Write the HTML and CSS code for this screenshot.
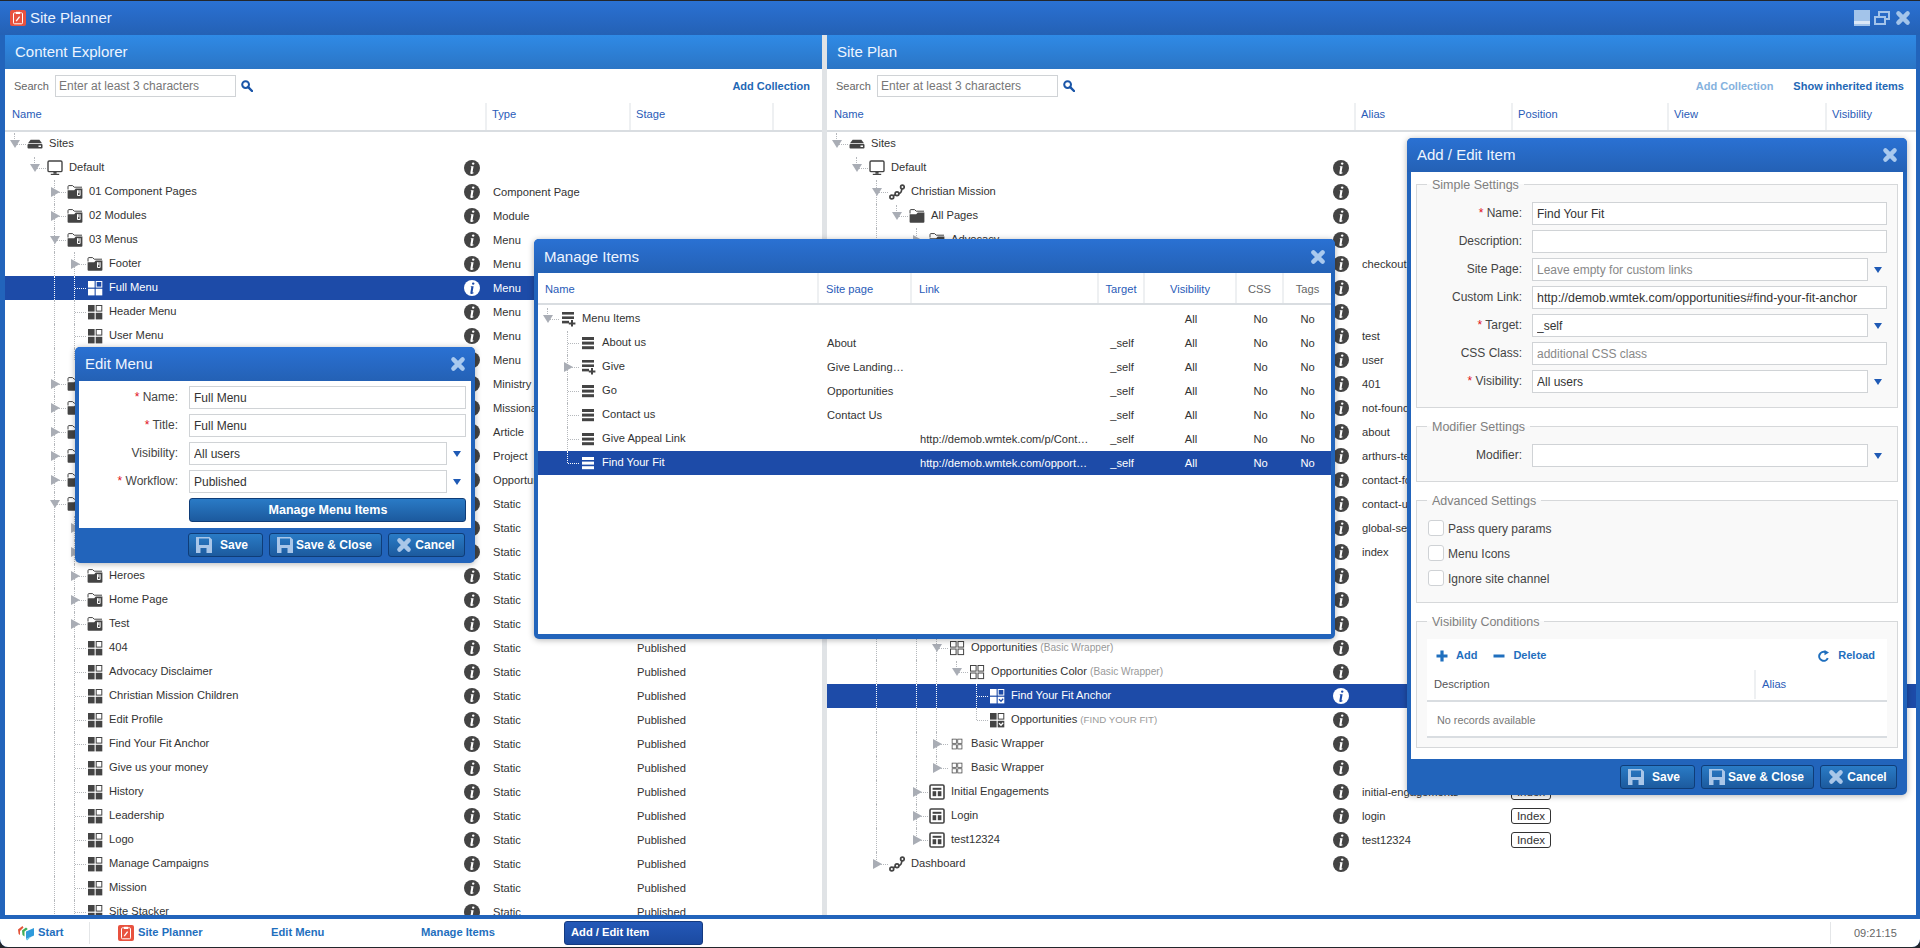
FILE: index.html
```html
<!DOCTYPE html>
<html lang="en">
<head>
<meta charset="utf-8">
<title>Site Planner</title>
<link rel="stylesheet" href="styles.css">
</head>
<body>
<svg class="defs" aria-hidden="true">
  <symbol id="sites" viewBox="0 0 16 16"><path fill="currentColor" d="M3.6 3.8h8.8L15 7.2H1z"/><path fill="currentColor" fill-rule="evenodd" d="M1.5 8h13a1 1 0 0 1 1 1v2.6a1 1 0 0 1-1 1h-13a1 1 0 0 1-1-1V9a1 1 0 0 1 1-1zM11.5 9.6v1.4h2.5V9.6z"/></symbol>
  <symbol id="monitor" viewBox="0 0 16 16"><rect x="1" y="1" width="14" height="10.6" rx="1.2" fill="none" stroke="currentColor" stroke-width="1.4"/><rect x="6.4" y="12" width="3.2" height="1.8" fill="currentColor"/><rect x="3.8" y="13.8" width="8.4" height="1.2" fill="currentColor"/></symbol>
  <symbol id="folder" viewBox="0 0 16 16"><path fill="none" stroke="currentColor" stroke-width="1" d="M1 5.5V2.600a1 1 0 0 1 1-1h3.600l1.600 1.600H15"/><path fill="currentColor" d="M.6 6.200h6.600l1.600-1.700h6.600v9.200a1 1 0 0 1-1 1H1.600a1 1 0 0 1-1-1z"/></symbol>
  <symbol id="folderm" viewBox="0 0 16 16"><path fill="none" stroke="currentColor" stroke-width="1" d="M1 5.500V2.600a1 1 0 0 1 1-1h3.600l1.600 1.600H15"/><path fill="currentColor" d="M.6 6.200h6.600l1.600-1.700h6.600v9.200a1 1 0 0 1-1 1H1.600a1 1 0 0 1-1-1z"/><path fill="none" stroke="#fff" stroke-width="1" d="M10.500 6.200v5.300h2.600V6.200M11.800 6.200v3"/></symbol>
  <symbol id="tiles" viewBox="0 0 16 16"><rect x="1" y="1" width="6.600" height="6.600" fill="currentColor"/><rect x="9.200" y="1.500" width="5.600" height="5.600" fill="none" stroke="currentColor"/><rect x="1" y="8.800" width="6.600" height="6.600" fill="currentColor"/><rect x="8.700" y="8.800" width="6.600" height="6.600" fill="currentColor"/></symbol>
  <symbol id="tcheck" viewBox="0 0 16 16"><rect x="1" y="1" width="6.600" height="6.600" fill="currentColor"/><rect x="9.200" y="1.500" width="5.600" height="5.600" fill="none" stroke="currentColor"/><rect x="1" y="8.800" width="6.600" height="6.600" fill="currentColor"/><rect x="8.700" y="8.800" width="6.600" height="6.600" fill="currentColor"/><path d="M10 11.200l2 2 2.200-2.400" fill="none" stroke="var(--ck,#fff)" stroke-width="1.300"/></symbol>
  <symbol id="wrap" viewBox="0 0 16 16"><rect x="1.500" y="1.500" width="5.600" height="5.600" fill="none" stroke="currentColor"/><rect x="9" y="1.500" width="5.600" height="5.600" fill="none" stroke="currentColor"/><rect x="1.500" y="9" width="5.600" height="5.600" fill="none" stroke="currentColor"/><rect x="9" y="9" width="5.600" height="5.600" fill="none" stroke="currentColor"/></symbol>
  <symbol id="layout" viewBox="0 0 16 16"><rect x="1" y="1" width="14" height="14" rx="1.200" fill="none" stroke="currentColor" stroke-width="1.600"/><rect x="3.600" y="3.800" width="8.800" height="2" fill="currentColor"/><rect x="3.600" y="7.200" width="3.600" height="5" fill="currentColor"/><rect x="8.800" y="7.200" width="3.600" height="5" fill="currentColor"/></symbol>
  <symbol id="net" viewBox="0 0 16 16"><g fill="none" stroke="currentColor" stroke-width="1.700"><circle cx="2.800" cy="13" r="1.900"/><circle cx="8" cy="9.800" r="1.900"/><circle cx="13.400" cy="3" r="1.800"/><path d="M4.400 11.800l1.800-1.200M9.800 9.600c1.800-.4 2.800-1.800 3-4.600"/></g></symbol>
  <symbol id="list" viewBox="0 0 16 16"><rect x="2" y="2" width="12" height="3" fill="currentColor"/><rect x="2" y="6.600" width="12" height="3" fill="currentColor"/><rect x="2" y="11.200" width="12" height="3" fill="currentColor"/></symbol>
  <symbol id="listp" viewBox="0 0 16 16"><rect x="2" y="1" width="12" height="2.600" fill="currentColor"/><rect x="2" y="5.400" width="12" height="2.600" fill="currentColor"/><rect x="2" y="9.800" width="7" height="2.600" fill="currentColor"/><path d="M12 9v6.600M8.800 12.400h6.600" stroke="currentColor" stroke-width="2"/></symbol>
  <symbol id="info" viewBox="0 0 16 16"><circle cx="8" cy="8" r="8" fill="currentColor"/><circle cx="9.200" cy="3.600" r="1.200" fill="var(--ck,#fff)"/><path fill="var(--ck,#fff)" d="M6.900 6.200h2.700L8.600 12c-.1.600.2.600.9.2v1c-1.600 1-3.400 1.100-3.100-.8l.9-5.200-.6-.2z"/></symbol>
  <symbol id="cross" viewBox="0 0 16 16"><path d="M3.400 3.400l9.200 9.200M12.600 3.400l-9.200 9.200" stroke="currentColor" stroke-width="4.400" stroke-linecap="round"/></symbol>
  <symbol id="restore" viewBox="0 0 16 14"><path d="M1 6h10v7H1zM5 5V1h10v7h-3.500" fill="none" stroke="currentColor" stroke-width="2"/></symbol>
  <symbol id="floppy" viewBox="0 0 16 16"><path fill="currentColor" fill-rule="evenodd" d="M0 0h13.500L16 2.500V16H0zM3 1.500V8h10V1.500zM4.500 11v5h6v-5z"/></symbol>
  <symbol id="search" viewBox="0 0 12 12"><circle cx="4.600" cy="4.600" r="3.400" fill="none" stroke="currentColor" stroke-width="2"/><path d="M7.200 7.200l3.800 3.800" stroke="currentColor" stroke-width="2.400" stroke-linecap="round"/></symbol>
  <symbol id="plan" viewBox="0 0 16 16"><rect width="16" height="16" rx="2" fill="#e8523f"/><rect x="3.500" y="2.800" width="9" height="11" rx="1" fill="none" stroke="#fff"/><rect x="6" y="1.800" width="4" height="2.200" fill="#fff"/><path d="M6.200 11.200l3.400-4.600" stroke="#fff" stroke-width="1.300"/></symbol>
  <symbol id="start" viewBox="0 0 16 16"><path fill="#e4553a" d="M0 4.500L4.500 1l1 1.500L2 6v4L.6 9z"/><path fill="#3fae5a" d="M4 5.500L8 2.500l1.800 1.400L6.500 6.500v5L4.500 10z"/><path fill="#2f9bdc" d="M8 6.500L16 3v7.500L8 14z"/><path fill="#5cc3e6" d="M8 14l5-2.200-4 3.700z"/></symbol>
  <symbol id="plus" viewBox="0 0 12 12"><path d="M6 .5v11M.5 6h11" stroke="currentColor" stroke-width="3.200"/></symbol>
  <symbol id="minus" viewBox="0 0 12 12"><path d="M.5 6h11" stroke="currentColor" stroke-width="3"/></symbol>
  <symbol id="reload" viewBox="0 0 12 12"><path d="M9.800 8.200A4.500 4.500 0 1 1 7.500 2.200" fill="none" stroke="currentColor" stroke-width="2"/><path fill="currentColor" d="M6.500 0l4.500 2.600-4.500 2.600z"/></symbol>
</svg>

<div class="window">
  <header class="titlebar">
    <svg class="tb-logo"><use href="#plan"/></svg>
    <span class="tb-title">Site Planner</span>
    <span class="tb-btns">
      <span class="wb-min"></span>
      <svg class="wb-rest"><use href="#restore"/></svg>
      <svg class="wb-close"><use href="#cross"/></svg>
    </span>
  </header>

  <main class="panels">
    <section class="panel panel-l">
      <h2 class="p-head">Content Explorer</h2>
      <div class="p-search">
        <label class="s-label">Search</label>
        <input class="s-input" placeholder="Enter at least 3 characters">
        <svg class="s-icon"><use href="#search"/></svg>
        <a class="p-link p-link-end">Add Collection</a>
      </div>
      <div class="cols cols-l">
        <span class="col col-sep">Name</span><span class="col col-sep">Type</span><span class="col col-sep">Stage</span><span class="col"></span>
      </div>
      <div class="tree tree-l">
        <div class="row"><div class="name"><i class="s u h"><b class="td"></b></i><svg class="ic"><use href="#sites"/></svg><span class="lb">Sites</span></div></div>
        <div class="row"><div class="name"><i class="s"></i><i class="s u h"><b class="td"></b></i><svg class="ic"><use href="#monitor"/></svg><span class="lb">Default</span><svg class="inf"><use href="#info"/></svg></div></div>
        <div class="row"><div class="name"><i class="s"></i><i class="s"></i><i class="s v h"><b class="tr"></b></i><svg class="ic"><use href="#folderm"/></svg><span class="lb">01 Component Pages</span><svg class="inf"><use href="#info"/></svg></div><div class="c1">Component Page</div></div>
        <div class="row"><div class="name"><i class="s"></i><i class="s"></i><i class="s v h"><b class="tr"></b></i><svg class="ic"><use href="#folderm"/></svg><span class="lb">02 Modules</span><svg class="inf"><use href="#info"/></svg></div><div class="c1">Module</div></div>
        <div class="row"><div class="name"><i class="s"></i><i class="s"></i><i class="s v h"><b class="td"></b></i><svg class="ic"><use href="#folderm"/></svg><span class="lb">03 Menus</span><svg class="inf"><use href="#info"/></svg></div><div class="c1">Menu</div></div>
        <div class="row"><div class="name"><i class="s"></i><i class="s"></i><i class="s v"></i><i class="s v h"><b class="tr"></b></i><svg class="ic"><use href="#folderm"/></svg><span class="lb">Footer</span><svg class="inf"><use href="#info"/></svg></div><div class="c1">Menu</div></div>
        <div class="row sel"><div class="name"><i class="s"></i><i class="s"></i><i class="s v"></i><i class="s v h"></i><svg class="ic"><use href="#tiles"/></svg><span class="lb">Full Menu</span><svg class="inf"><use href="#info"/></svg></div><div class="c1">Menu</div></div>
        <div class="row"><div class="name"><i class="s"></i><i class="s"></i><i class="s v"></i><i class="s v h"></i><svg class="ic"><use href="#tiles"/></svg><span class="lb">Header Menu</span><svg class="inf"><use href="#info"/></svg></div><div class="c1">Menu</div></div>
        <div class="row"><div class="name"><i class="s"></i><i class="s"></i><i class="s v"></i><i class="s v h"></i><svg class="ic"><use href="#tiles"/></svg><span class="lb">User Menu</span><svg class="inf"><use href="#info"/></svg></div><div class="c1">Menu</div></div>
        <div class="row"><div class="name"><i class="s"></i><i class="s"></i><i class="s v"></i><i class="s e h"></i><svg class="ic"><use href="#tiles"/></svg><span class="lb">Mobile Menu</span><svg class="inf"><use href="#info"/></svg></div><div class="c1">Menu</div></div>
        <div class="row"><div class="name"><i class="s"></i><i class="s"></i><i class="s v h"><b class="tr"></b></i><svg class="ic"><use href="#folderm"/></svg><span class="lb">Ministries</span><svg class="inf"><use href="#info"/></svg></div><div class="c1">Ministry</div></div>
        <div class="row"><div class="name"><i class="s"></i><i class="s"></i><i class="s v h"><b class="tr"></b></i><svg class="ic"><use href="#folderm"/></svg><span class="lb">Missionals</span><svg class="inf"><use href="#info"/></svg></div><div class="c1">Missional</div></div>
        <div class="row"><div class="name"><i class="s"></i><i class="s"></i><i class="s v h"><b class="tr"></b></i><svg class="ic"><use href="#folderm"/></svg><span class="lb">Articles</span><svg class="inf"><use href="#info"/></svg></div><div class="c1">Article</div></div>
        <div class="row"><div class="name"><i class="s"></i><i class="s"></i><i class="s v h"><b class="tr"></b></i><svg class="ic"><use href="#folderm"/></svg><span class="lb">Projects</span><svg class="inf"><use href="#info"/></svg></div><div class="c1">Project</div></div>
        <div class="row"><div class="name"><i class="s"></i><i class="s"></i><i class="s v h"><b class="tr"></b></i><svg class="ic"><use href="#folderm"/></svg><span class="lb">Opportunities</span><svg class="inf"><use href="#info"/></svg></div><div class="c1">Opportunity</div></div>
        <div class="row"><div class="name"><i class="s"></i><i class="s"></i><i class="s v h"><b class="td"></b></i><svg class="ic"><use href="#folderm"/></svg><span class="lb">Static</span><svg class="inf"><use href="#info"/></svg></div><div class="c1">Static</div><div class="c2">Published</div></div>
        <div class="row"><div class="name"><i class="s"></i><i class="s"></i><i class="s v"></i><i class="s v h"><b class="tr"></b></i><svg class="ic"><use href="#folderm"/></svg><span class="lb">Banners</span><svg class="inf"><use href="#info"/></svg></div><div class="c1">Static</div><div class="c2">Published</div></div>
        <div class="row"><div class="name"><i class="s"></i><i class="s"></i><i class="s v"></i><i class="s v h"><b class="tr"></b></i><svg class="ic"><use href="#folderm"/></svg><span class="lb">Footers</span><svg class="inf"><use href="#info"/></svg></div><div class="c1">Static</div><div class="c2">Published</div></div>
        <div class="row"><div class="name"><i class="s"></i><i class="s"></i><i class="s v"></i><i class="s v h"><b class="tr"></b></i><svg class="ic"><use href="#folderm"/></svg><span class="lb">Heroes</span><svg class="inf"><use href="#info"/></svg></div><div class="c1">Static</div><div class="c2">Published</div></div>
        <div class="row"><div class="name"><i class="s"></i><i class="s"></i><i class="s v"></i><i class="s v h"><b class="tr"></b></i><svg class="ic"><use href="#folderm"/></svg><span class="lb">Home Page</span><svg class="inf"><use href="#info"/></svg></div><div class="c1">Static</div><div class="c2">Published</div></div>
        <div class="row"><div class="name"><i class="s"></i><i class="s"></i><i class="s v"></i><i class="s v h"><b class="tr"></b></i><svg class="ic"><use href="#folderm"/></svg><span class="lb">Test</span><svg class="inf"><use href="#info"/></svg></div><div class="c1">Static</div><div class="c2">Published</div></div>
        <div class="row"><div class="name"><i class="s"></i><i class="s"></i><i class="s v"></i><i class="s v h"></i><svg class="ic"><use href="#tiles"/></svg><span class="lb">404</span><svg class="inf"><use href="#info"/></svg></div><div class="c1">Static</div><div class="c2">Published</div></div>
        <div class="row"><div class="name"><i class="s"></i><i class="s"></i><i class="s v"></i><i class="s v h"></i><svg class="ic"><use href="#tiles"/></svg><span class="lb">Advocacy Disclaimer</span><svg class="inf"><use href="#info"/></svg></div><div class="c1">Static</div><div class="c2">Published</div></div>
        <div class="row"><div class="name"><i class="s"></i><i class="s"></i><i class="s v"></i><i class="s v h"></i><svg class="ic"><use href="#tiles"/></svg><span class="lb">Christian Mission Children</span><svg class="inf"><use href="#info"/></svg></div><div class="c1">Static</div><div class="c2">Published</div></div>
        <div class="row"><div class="name"><i class="s"></i><i class="s"></i><i class="s v"></i><i class="s v h"></i><svg class="ic"><use href="#tiles"/></svg><span class="lb">Edit Profile</span><svg class="inf"><use href="#info"/></svg></div><div class="c1">Static</div><div class="c2">Published</div></div>
        <div class="row"><div class="name"><i class="s"></i><i class="s"></i><i class="s v"></i><i class="s v h"></i><svg class="ic"><use href="#tiles"/></svg><span class="lb">Find Your Fit Anchor</span><svg class="inf"><use href="#info"/></svg></div><div class="c1">Static</div><div class="c2">Published</div></div>
        <div class="row"><div class="name"><i class="s"></i><i class="s"></i><i class="s v"></i><i class="s v h"></i><svg class="ic"><use href="#tiles"/></svg><span class="lb">Give us your money</span><svg class="inf"><use href="#info"/></svg></div><div class="c1">Static</div><div class="c2">Published</div></div>
        <div class="row"><div class="name"><i class="s"></i><i class="s"></i><i class="s v"></i><i class="s v h"></i><svg class="ic"><use href="#tiles"/></svg><span class="lb">History</span><svg class="inf"><use href="#info"/></svg></div><div class="c1">Static</div><div class="c2">Published</div></div>
        <div class="row"><div class="name"><i class="s"></i><i class="s"></i><i class="s v"></i><i class="s v h"></i><svg class="ic"><use href="#tiles"/></svg><span class="lb">Leadership</span><svg class="inf"><use href="#info"/></svg></div><div class="c1">Static</div><div class="c2">Published</div></div>
        <div class="row"><div class="name"><i class="s"></i><i class="s"></i><i class="s v"></i><i class="s v h"></i><svg class="ic"><use href="#tiles"/></svg><span class="lb">Logo</span><svg class="inf"><use href="#info"/></svg></div><div class="c1">Static</div><div class="c2">Published</div></div>
        <div class="row"><div class="name"><i class="s"></i><i class="s"></i><i class="s v"></i><i class="s v h"></i><svg class="ic"><use href="#tiles"/></svg><span class="lb">Manage Campaigns</span><svg class="inf"><use href="#info"/></svg></div><div class="c1">Static</div><div class="c2">Published</div></div>
        <div class="row"><div class="name"><i class="s"></i><i class="s"></i><i class="s v"></i><i class="s v h"></i><svg class="ic"><use href="#tiles"/></svg><span class="lb">Mission</span><svg class="inf"><use href="#info"/></svg></div><div class="c1">Static</div><div class="c2">Published</div></div>
        <div class="row"><div class="name"><i class="s"></i><i class="s"></i><i class="s v"></i><i class="s v h"></i><svg class="ic"><use href="#tiles"/></svg><span class="lb">Site Stacker</span><svg class="inf"><use href="#info"/></svg></div><div class="c1">Static</div><div class="c2">Published</div></div>
      </div>
    </section>

    <div class="splitter"></div>

    <section class="panel panel-r">
      <h2 class="p-head">Site Plan</h2>
      <div class="p-search">
        <label class="s-label">Search</label>
        <input class="s-input" placeholder="Enter at least 3 characters">
        <svg class="s-icon"><use href="#search"/></svg>
        <a class="p-link p-link-end p-link-off">Add Collection</a>
        <a class="p-link">Show inherited items</a>
      </div>
      <div class="cols cols-r">
        <span class="col col-sep">Name</span><span class="col col-sep">Alias</span><span class="col col-sep">Position</span><span class="col col-sep">View</span><span class="col">Visibility</span>
      </div>
      <div class="tree tree-r">
        <div class="row"><div class="name"><i class="s u h"><b class="td"></b></i><svg class="ic"><use href="#sites"/></svg><span class="lb">Sites</span></div></div>
        <div class="row"><div class="name"><i class="s"></i><i class="s u h"><b class="td"></b></i><svg class="ic"><use href="#monitor"/></svg><span class="lb">Default</span><svg class="inf"><use href="#info"/></svg></div></div>
        <div class="row"><div class="name"><i class="s"></i><i class="s"></i><i class="s v h"><b class="td"></b></i><svg class="ic"><use href="#net"/></svg><span class="lb">Christian Mission</span><svg class="inf"><use href="#info"/></svg></div></div>
        <div class="row"><div class="name"><i class="s"></i><i class="s"></i><i class="s v"></i><i class="s u h"><b class="td"></b></i><svg class="ic"><use href="#folder"/></svg><span class="lb">All Pages</span><svg class="inf"><use href="#info"/></svg></div></div>
        <div class="row"><div class="name"><i class="s"></i><i class="s"></i><i class="s v"></i><i class="s"></i><i class="s v h"><b class="tr"></b></i><svg class="ic"><use href="#folder"/></svg><span class="lb">Advocacy</span><svg class="inf"><use href="#info"/></svg></div></div>
        <div class="row"><div class="name"><i class="s"></i><i class="s"></i><i class="s v"></i><i class="s"></i><i class="s v h"><b class="tr"></b></i><svg class="ic"><use href="#layout"/></svg><span class="lb">Checkout</span><svg class="inf"><use href="#info"/></svg></div><div class="c1">checkout</div></div>
        <div class="row"><div class="name"><i class="s"></i><i class="s"></i><i class="s v"></i><i class="s"></i><i class="s v h"><b class="tr"></b></i><svg class="ic"><use href="#folder"/></svg><span class="lb">Errors</span><svg class="inf"><use href="#info"/></svg></div></div>
        <div class="row"><div class="name"><i class="s"></i><i class="s"></i><i class="s v"></i><i class="s"></i><i class="s v h"><b class="tr"></b></i><svg class="ic"><use href="#folder"/></svg><span class="lb">Projects</span><svg class="inf"><use href="#info"/></svg></div></div>
        <div class="row"><div class="name"><i class="s"></i><i class="s"></i><i class="s v"></i><i class="s"></i><i class="s v h"><b class="tr"></b></i><svg class="ic"><use href="#layout"/></svg><span class="lb">Test</span><svg class="inf"><use href="#info"/></svg></div><div class="c1">test</div></div>
        <div class="row"><div class="name"><i class="s"></i><i class="s"></i><i class="s v"></i><i class="s"></i><i class="s v h"><b class="tr"></b></i><svg class="ic"><use href="#layout"/></svg><span class="lb">User</span><svg class="inf"><use href="#info"/></svg></div><div class="c1">user</div></div>
        <div class="row"><div class="name"><i class="s"></i><i class="s"></i><i class="s v"></i><i class="s"></i><i class="s v h"><b class="tr"></b></i><svg class="ic"><use href="#layout"/></svg><span class="lb">401</span><svg class="inf"><use href="#info"/></svg></div><div class="c1">401</div></div>
        <div class="row"><div class="name"><i class="s"></i><i class="s"></i><i class="s v"></i><i class="s"></i><i class="s v h"><b class="tr"></b></i><svg class="ic"><use href="#layout"/></svg><span class="lb">404</span><svg class="inf"><use href="#info"/></svg></div><div class="c1">not-found</div></div>
        <div class="row"><div class="name"><i class="s"></i><i class="s"></i><i class="s v"></i><i class="s"></i><i class="s v h"><b class="tr"></b></i><svg class="ic"><use href="#layout"/></svg><span class="lb">About</span><svg class="inf"><use href="#info"/></svg></div><div class="c1">about</div></div>
        <div class="row"><div class="name"><i class="s"></i><i class="s"></i><i class="s v"></i><i class="s"></i><i class="s v h"><b class="tr"></b></i><svg class="ic"><use href="#layout"/></svg><span class="lb">Arthurs Test</span><svg class="inf"><use href="#info"/></svg></div><div class="c1">arthurs-test</div></div>
        <div class="row"><div class="name"><i class="s"></i><i class="s"></i><i class="s v"></i><i class="s"></i><i class="s v h"><b class="tr"></b></i><svg class="ic"><use href="#layout"/></svg><span class="lb">Contact Form</span><svg class="inf"><use href="#info"/></svg></div><div class="c1">contact-form</div></div>
        <div class="row"><div class="name"><i class="s"></i><i class="s"></i><i class="s v"></i><i class="s"></i><i class="s v h"><b class="tr"></b></i><svg class="ic"><use href="#layout"/></svg><span class="lb">Contact Us</span><svg class="inf"><use href="#info"/></svg></div><div class="c1">contact-us</div></div>
        <div class="row"><div class="name"><i class="s"></i><i class="s"></i><i class="s v"></i><i class="s"></i><i class="s v h"><b class="tr"></b></i><svg class="ic"><use href="#layout"/></svg><span class="lb">Global Settings</span><svg class="inf"><use href="#info"/></svg></div><div class="c1">global-settings</div></div>
        <div class="row"><div class="name"><i class="s"></i><i class="s"></i><i class="s v"></i><i class="s"></i><i class="s v h"><b class="td"></b></i><svg class="ic"><use href="#layout"/></svg><span class="lb">Home</span><svg class="inf"><use href="#info"/></svg></div><div class="c1">index</div></div>
        <div class="row"><div class="name"><i class="s"></i><i class="s"></i><i class="s v"></i><i class="s"></i><i class="s v"></i><i class="s v h"><b class="tr"></b></i><svg class="ic"><use href="#wrap"/></svg><span class="lb">Hero</span><svg class="inf"><use href="#info"/></svg></div></div>
        <div class="row"><div class="name"><i class="s"></i><i class="s"></i><i class="s v"></i><i class="s"></i><i class="s v"></i><i class="s v h"><b class="tr"></b></i><svg class="ic"><use href="#wrap"/></svg><span class="lb">Mission</span><svg class="inf"><use href="#info"/></svg></div></div>
        <div class="row"><div class="name"><i class="s"></i><i class="s"></i><i class="s v"></i><i class="s"></i><i class="s v"></i><i class="s v h"><b class="tr"></b></i><svg class="ic"><use href="#wrap"/></svg><span class="lb">Give</span><svg class="inf"><use href="#info"/></svg></div></div>
        <div class="row"><div class="name"><i class="s"></i><i class="s"></i><i class="s v"></i><i class="s"></i><i class="s v"></i><i class="s v h"><b class="td"></b></i><svg class="ic"><use href="#wrap"/></svg><span class="lb">Opportunities <small class="mut">(Basic Wrapper)</small></span><svg class="inf"><use href="#info"/></svg></div></div>
        <div class="row"><div class="name"><i class="s"></i><i class="s"></i><i class="s v"></i><i class="s"></i><i class="s v"></i><i class="s v"></i><i class="s u h"><b class="td"></b></i><svg class="ic"><use href="#wrap"/></svg><span class="lb">Opportunities Color <small class="mut">(Basic Wrapper)</small></span><svg class="inf"><use href="#info"/></svg></div></div>
        <div class="row sel"><div class="name"><i class="s"></i><i class="s"></i><i class="s v"></i><i class="s"></i><i class="s v"></i><i class="s v"></i><i class="s"></i><i class="s v h"></i><svg class="ic"><use href="#tcheck"/></svg><span class="lb">Find Your Fit Anchor</span><svg class="inf"><use href="#info"/></svg></div></div>
        <div class="row"><div class="name"><i class="s"></i><i class="s"></i><i class="s v"></i><i class="s"></i><i class="s v"></i><i class="s v"></i><i class="s"></i><i class="s e h"></i><svg class="ic"><use href="#tcheck"/></svg><span class="lb">Opportunities <small class="mut mut-up">(FIND YOUR FIT)</small></span><svg class="inf"><use href="#info"/></svg></div></div>
        <div class="row"><div class="name"><i class="s"></i><i class="s"></i><i class="s v"></i><i class="s"></i><i class="s v"></i><i class="s v h"><b class="tr"></b></i><svg class="ic ic-sm"><use href="#wrap"/></svg><span class="lb">Basic Wrapper</span><svg class="inf"><use href="#info"/></svg></div></div>
        <div class="row"><div class="name"><i class="s"></i><i class="s"></i><i class="s v"></i><i class="s"></i><i class="s v"></i><i class="s e h"><b class="tr"></b></i><svg class="ic ic-sm"><use href="#wrap"/></svg><span class="lb">Basic Wrapper</span><svg class="inf"><use href="#info"/></svg></div></div>
        <div class="row"><div class="name"><i class="s"></i><i class="s"></i><i class="s v"></i><i class="s"></i><i class="s v h"><b class="tr"></b></i><svg class="ic"><use href="#layout"/></svg><span class="lb">Initial Engagements</span><svg class="inf"><use href="#info"/></svg></div><div class="c1">initial-engagements</div><div class="c2"><span class="pill">Index</span></div></div>
        <div class="row"><div class="name"><i class="s"></i><i class="s"></i><i class="s v"></i><i class="s"></i><i class="s v h"><b class="tr"></b></i><svg class="ic"><use href="#layout"/></svg><span class="lb">Login</span><svg class="inf"><use href="#info"/></svg></div><div class="c1">login</div><div class="c2"><span class="pill">Index</span></div></div>
        <div class="row"><div class="name"><i class="s"></i><i class="s"></i><i class="s v"></i><i class="s"></i><i class="s e h"><b class="tr"></b></i><svg class="ic"><use href="#layout"/></svg><span class="lb">test12324</span><svg class="inf"><use href="#info"/></svg></div><div class="c1">test12324</div><div class="c2"><span class="pill">Index</span></div></div>
        <div class="row"><div class="name"><i class="s"></i><i class="s"></i><i class="s e h"><b class="tr"></b></i><svg class="ic"><use href="#net"/></svg><span class="lb">Dashboard</span><svg class="inf"><use href="#info"/></svg></div></div>
      </div>
    </section>
  </main>

  <footer class="taskbar">
    <div class="tk-start"><svg class="tk-ic"><use href="#start"/></svg><span>Start</span></div>
    <div class="tk-tabs">
      <a class="tk-tab tk-tab-first"><svg class="tk-ic"><use href="#plan"/></svg>Site Planner</a>
      <a class="tk-tab">Edit Menu</a>
      <a class="tk-tab">Manage Items</a>
      <a class="tk-tab tk-active">Add / Edit Item</a>
    </div>
    <div class="tk-clock">09:21:15</div>
  </footer>
</div>

<section class="modal m-edit">
  <header class="m-title"><span>Edit Menu</span><svg class="m-x"><use href="#cross"/></svg></header>
  <div class="m-body form-edit">
    <div class="f-row"><label class="f-label"><em>*</em> Name:</label><input class="f-in" value="Full Menu"></div>
    <div class="f-row"><label class="f-label"><em>*</em> Title:</label><input class="f-in" value="Full Menu"></div>
    <div class="f-row"><label class="f-label">Visibility:</label><input class="f-in f-combo" value="All users"><span class="f-arrow"></span></div>
    <div class="f-row"><label class="f-label"><em>*</em> Workflow:</label><input class="f-in f-combo" value="Published"><span class="f-arrow"></span></div>
    <div class="f-row"><span class="f-label"></span><button class="btn btn-wide">Manage Menu Items</button></div>
  </div>
  <footer class="m-foot">
    <button class="btn b-save"><svg class="b-ic"><use href="#floppy"/></svg><span>Save</span></button>
    <button class="btn b-close"><svg class="b-ic"><use href="#floppy"/></svg><span>Save &amp; Close</span></button>
    <button class="btn b-cancel"><svg class="b-ic"><use href="#cross"/></svg><span>Cancel</span></button>
  </footer>
</section>

<section class="modal m-manage">
  <header class="m-title"><span>Manage Items</span><svg class="m-x"><use href="#cross"/></svg></header>
  <div class="m-body mg">
    <div class="mg-row mg-head">
      <span class="col-sep mg-left">Name</span><span class="col-sep mg-left">Site page</span><span class="col-sep mg-left">Link</span><span class="col-sep mg-c">Target</span><span class="col-sep mg-c">Visibility</span><span class="col-sep mg-c mg-gr">CSS</span><span class="mg-c mg-gr">Tags</span>
    </div>
    <div class="mg-row"><div class="mg-name"><i class="s u h"><b class="td"></b></i><svg class="ic"><use href="#listp"/></svg><span class="lb">Menu Items</span></div><span class="mg-t"></span><span class="mg-t"></span><span class="mg-c"></span><span class="mg-c">All</span><span class="mg-c">No</span><span class="mg-c">No</span></div>
    <div class="mg-row"><div class="mg-name"><i class="s"></i><i class="s v h"></i><svg class="ic"><use href="#list"/></svg><span class="lb">About us</span></div><span class="mg-t">About</span><span class="mg-t"></span><span class="mg-c">_self</span><span class="mg-c">All</span><span class="mg-c">No</span><span class="mg-c">No</span></div>
    <div class="mg-row"><div class="mg-name"><i class="s"></i><i class="s v h"><b class="tr"></b></i><svg class="ic"><use href="#listp"/></svg><span class="lb">Give</span></div><span class="mg-t">Give Landing Page</span><span class="mg-t"></span><span class="mg-c">_self</span><span class="mg-c">All</span><span class="mg-c">No</span><span class="mg-c">No</span></div>
    <div class="mg-row"><div class="mg-name"><i class="s"></i><i class="s v h"></i><svg class="ic"><use href="#list"/></svg><span class="lb">Go</span></div><span class="mg-t">Opportunities</span><span class="mg-t"></span><span class="mg-c">_self</span><span class="mg-c">All</span><span class="mg-c">No</span><span class="mg-c">No</span></div>
    <div class="mg-row"><div class="mg-name"><i class="s"></i><i class="s v h"></i><svg class="ic"><use href="#list"/></svg><span class="lb">Contact us</span></div><span class="mg-t">Contact Us</span><span class="mg-t"></span><span class="mg-c">_self</span><span class="mg-c">All</span><span class="mg-c">No</span><span class="mg-c">No</span></div>
    <div class="mg-row"><div class="mg-name"><i class="s"></i><i class="s v h"></i><svg class="ic"><use href="#list"/></svg><span class="lb">Give Appeal Link</span></div><span class="mg-t"></span><span class="mg-t">http://demob.wmtek.com/p/Contact-Us</span><span class="mg-c">_self</span><span class="mg-c">All</span><span class="mg-c">No</span><span class="mg-c">No</span></div>
    <div class="mg-row sel"><div class="mg-name"><i class="s"></i><i class="s e h"></i><svg class="ic"><use href="#list"/></svg><span class="lb">Find Your Fit</span></div><span class="mg-t"></span><span class="mg-t">http://demob.wmtek.com/opportunities#find-your-fit-anchor</span><span class="mg-c">_self</span><span class="mg-c">All</span><span class="mg-c">No</span><span class="mg-c">No</span></div>
  </div>
</section>

<section class="modal m-add">
  <header class="m-title"><span>Add / Edit Item</span><svg class="m-x"><use href="#cross"/></svg></header>
  <div class="m-body form-add">
    <fieldset class="fs fs-simple">
      <legend>Simple Settings</legend>
      <div class="f-row"><label class="f-label"><em>*</em> Name:</label><input class="f-in" value="Find Your Fit"></div>
      <div class="f-row"><label class="f-label">Description:</label><input class="f-in"></div>
      <div class="f-row"><label class="f-label">Site Page:</label><input class="f-in f-combo" placeholder="Leave empty for custom links"><span class="f-arrow"></span></div>
      <div class="f-row"><label class="f-label">Custom Link:</label><input class="f-in f-url" value="http://demob.wmtek.com/opportunities#find-your-fit-anchor"></div>
      <div class="f-row"><label class="f-label"><em>*</em> Target:</label><input class="f-in f-combo" value="_self"><span class="f-arrow"></span></div>
      <div class="f-row"><label class="f-label">CSS Class:</label><input class="f-in" placeholder="additional CSS class"></div>
      <div class="f-row"><label class="f-label"><em>*</em> Visibility:</label><input class="f-in f-combo" value="All users"><span class="f-arrow"></span></div>
    </fieldset>
    <fieldset class="fs">
      <legend>Modifier Settings</legend>
      <div class="f-row"><label class="f-label">Modifier:</label><input class="f-in f-combo"><span class="f-arrow"></span></div>
    </fieldset>
    <fieldset class="fs fs-adv">
      <legend>Advanced Settings</legend>
      <label class="chk"><span class="chk-box"></span>Pass query params</label>
      <label class="chk"><span class="chk-box"></span>Menu Icons</label>
      <label class="chk"><span class="chk-box"></span>Ignore site channel</label>
    </fieldset>
    <fieldset class="fs fs-vis">
      <legend>Visibility Conditions</legend>
      <div class="grid">
        <div class="g-tools">
          <svg class="g-ic"><use href="#plus"/></svg><a class="g-btn g-add">Add</a>
          <svg class="g-ic"><use href="#minus"/></svg><a class="g-btn">Delete</a>
          <svg class="g-ic g-end"><use href="#reload"/></svg><a class="g-btn">Reload</a>
        </div>
        <div class="g-head"><span class="g-desc">Description</span><span class="g-alias">Alias</span></div>
        <div class="g-empty">No records available</div>
      </div>
    </fieldset>
  </div>
  <footer class="m-foot">
    <button class="btn b-save"><svg class="b-ic"><use href="#floppy"/></svg><span>Save</span></button>
    <button class="btn b-close"><svg class="b-ic"><use href="#floppy"/></svg><span>Save &amp; Close</span></button>
    <button class="btn b-cancel"><svg class="b-ic"><use href="#cross"/></svg><span>Cancel</span></button>
  </footer>
</section>
</body>
</html>
```

FILE: styles.css
```css
* { box-sizing: border-box; }
html, body { margin: 0; height: 948px; overflow: hidden; }
body { background: #23262b; font: 12px/1.2 "Liberation Sans", Arial, sans-serif; color: #333; }
.defs { position: absolute; width: 0; height: 0; }
input, button { font-family: inherit; }

.window { margin-top: 1px; height: 946px; display: flex; flex-direction: column; border-radius: 0 0 8px 8px; overflow: hidden; background: #2264bb; }

.titlebar { flex: 0 0 34px; display: flex; align-items: center; padding: 0 9px 0 10px; background: linear-gradient(#2a71d3, #2461b5); color: #eaf2ff; }
.tb-logo { width: 16px; height: 16px; }
.tb-title { margin-left: 4px; font-size: 15px; }
.tb-btns { margin-left: auto; display: flex; align-items: center; gap: 4px; color: #a3c4ea; }
.wb-min { width: 16px; height: 16px; background: #a3c4ea; border-bottom: 2px solid #a3c4ea; box-shadow: inset 0 -3px 0 #dbe8f7; }
.wb-rest { width: 16px; height: 14px; margin-right: 1px; }
.wb-close { width: 16px; height: 16px; }

.panels { flex: 1; min-height: 0; display: flex; padding: 0 4px 0 5px; }
.panel { display: flex; flex-direction: column; min-width: 0; background: #fff; }
.panel-l { flex: 0 0 817px; }
.panel-r { flex: 0 0 1089px; }
.splitter { flex: 0 0 5px; background: #e0e3e6; }

.p-head { margin: 0; flex: 0 0 34px; display: flex; align-items: center; padding-left: 10px; font-size: 15px; font-weight: normal; color: #eef5ff; background: linear-gradient(#2f8ae6, #2b75c5); }
.p-search { flex: 0 0 34px; display: flex; align-items: center; padding: 0 12px 0 9px; }
.s-label { flex: 0 0 41px; margin-top: 2px; font-size: 11px; color: #666; }
.s-input { width: 181px; height: 22px; padding: 0 3px; border: 1px solid #d0d3d6; font-size: 12px; color: #333; }
.s-input::placeholder { color: #777; opacity: 1; }
.s-icon { width: 12px; height: 12px; margin-left: 5px; color: #1a55a8; }
.p-link { margin: 2px 0 0 20px; font-size: 11px; font-weight: bold; color: #1f68b5; }
.p-link-end { margin-left: auto; }
.p-link-off { color: #85b2de; }

.cols { flex: 0 0 29px; display: grid; border-bottom: 2px solid #d9dde1; color: #2a5cb8; font-size: 11.150px; }
.cols-l { grid-template-columns: 482px 144px 143px 1fr; }
.cols-r { grid-template-columns: 529px 157px 156px 158px 1fr; }
.col { display: flex; align-items: center; padding: 0 0 3px 5px; }
.col:first-child { padding-left: 7px; }
.col-sep { border-right: 2px solid #eef0f2; }

.tree { flex: 1; min-height: 0; overflow: hidden; font-size: 11.150px; }
.row { display: flex; height: 24px; align-items: center; }
.name { display: flex; align-items: center; flex: none; height: 24px; }
.tree-l .name { width: 480px; }
.tree-r .name { width: 527px; }
.tree-l .c1 { flex: 0 0 144px; padding: 2px 0 0 8px; }
.tree-l .c2 { flex: 0 0 143px; padding: 2px 0 0 8px; }
.tree-r .c1 { flex: 0 0 157px; padding: 1px 0 0 8px; overflow: hidden; white-space: nowrap; }
.tree-r .c2 { flex: 0 0 156px; }

.s { position: relative; flex: 0 0 20px; height: 24px; display: block; }
.s.v::before, .s.e::before, .s.u::before { content: ""; position: absolute; left: 9px; top: 0; height: 24px; border-left: 1px dotted #b5b8bc; }
.s.e::before { height: 12px; }
.s.u::before { height: 6px; top: 1px; }
.s.h::after { content: ""; position: absolute; left: 10px; top: 12px; width: 11px; border-top: 1px dotted #b5b8bc; }
.td, .tr { position: absolute; z-index: 1; width: 0; height: 0; border-style: solid; border-color: transparent; }
.td { left: 4.500px; top: 8px; border-width: 8px 5px 0; border-top-color: #a9adb5; }
.tr { left: 5.500px; top: 7px; border-width: 5px 0 5px 9px; border-left-color: #a9adb5; }

.ic { flex: none; width: 16px; height: 16px; margin: 0 6px 0 2px; color: #444; }
.ic-sm { width: 12px; height: 12px; margin: 0 8px 0 4px; }
.lb { white-space: nowrap; }
.mut { font-size: 10.150px; color: #999; }
.mut-up { font-size: 9.700px; }
.inf { flex: none; width: 16px; height: 16px; margin-left: auto; margin-right: 5px; color: #444; }
.pill { display: inline-block; width: 40px; height: 16px; line-height: 14px; text-align: center; border: 1px solid #333; border-radius: 3px; font-size: 11.500px; }

.sel { background: #1d4ba8; color: #fff; --ck: #1d4ba8; }
.sel .ic, .sel .inf { color: #fff; }
.sel .s::before, .sel .s::after { border-color: #fff; }

.taskbar { flex: 0 0 32px; display: flex; align-items: center; background: #fff; border-top: 4px solid #2264bb; color: #1f6fbe; font-size: 11.200px; font-weight: bold; }
.tk-start { flex: 0 0 90px; height: 22px; display: flex; align-items: center; padding-left: 18px; gap: 4px; border-right: 1px solid #e4e6e8; }
.tk-ic { flex: none; width: 16px; height: 16px; }
.tk-tabs { display: flex; gap: 11px; margin-left: 24px; }
.tk-tab { flex: 0 0 139px; height: 24px; display: flex; align-items: center; padding-left: 7px; gap: 4px; border-radius: 3px; }
.tk-tab-first { padding-left: 4px; }
.tk-active { background: linear-gradient(#2458b8, #1b4aa0); color: #fff; border: 1px solid #143a80; padding-left: 6px; }
.tk-clock { margin-left: auto; width: 90px; height: 22px; line-height: 22px; padding-left: 23px; border-left: 1px solid #e4e6e8; color: #666; font-size: 11px; font-weight: normal; }

.modal { position: absolute; z-index: 5; display: flex; flex-direction: column; background: #2264bb; border-radius: 5px; box-shadow: 0 1px 6px rgba(0, 0, 0, .3); overflow: hidden; }
.m-edit { left: 75px; top: 347px; width: 400px; height: 216px; }
.m-manage { left: 534px; top: 239px; width: 801px; height: 400px; }
.m-add { left: 1407px; top: 138px; width: 500px; height: 657px; }
.m-title { flex: 0 0 34px; display: flex; align-items: center; justify-content: space-between; padding: 0 9px 0 10px; background: linear-gradient(#2a71d3, #2461b5); color: #eef5ff; font-size: 15px; }
.m-manage .m-title { padding-top: 1px; }
.m-x { width: 16px; height: 16px; color: #a9c9ee; }
.m-body { flex: 1; min-height: 0; margin: 0 4px; background: #fff; }
.m-foot { flex: 0 0 35px; display: flex; justify-content: flex-end; align-items: center; gap: 6px; padding: 0 10px 1px 0; }
.m-add .m-foot { flex-basis: 36px; }

.btn { display: flex; align-items: center; height: 24px; padding: 0 6px 0 7px; border: 1px solid #0f3d78; border-radius: 3px; background: linear-gradient(#2a7bc6, #1c5a9e); color: #fff; font-size: 12px; font-weight: bold; }
.btn span { flex: 1; text-align: center; }
.b-save { width: 75px; }
.b-close { width: 113px; }
.b-cancel { width: 77px; }
.b-ic { flex: none; width: 16px; height: 16px; color: #a9c6e8; }
.btn-wide { width: 277px; justify-content: center; font-size: 12.500px; }

.form-edit { padding-top: 5px; }
.form-edit .f-label { flex: 0 0 99px; }
.form-edit .f-in { flex: 0 0 277px; }
.form-edit .f-combo { flex: 0 0 258px; }
.f-row { display: flex; align-items: center; height: 23px; margin-bottom: 5px; }
.f-label { color: #444; text-align: right; }
.f-label em { color: #e0101c; font-style: normal; }
.f-in { margin-left: 11px; height: 23px; padding: 0 4px; border: 1px solid #d0d3d6; background: #fff; font-size: 12px; color: #333; }
.f-url { font-size: 12.400px; }
.f-in::placeholder { color: #888; opacity: 1; }
.f-row .btn { margin-left: 11px; }
.f-arrow { margin-left: 6px; width: 0; height: 0; border-style: solid; border-width: 6px 4px 0; border-color: #1f5ab5 transparent transparent; }

.form-add { padding: 5px 5px 0; }
.fs { margin: 0 0 11px; padding: 10px 0 0; min-width: 0; border: 1px solid #d6d8da; background: #f9f9f9; }
.fs legend { margin-left: 10px; padding: 0 5px; font-size: 12.500px; line-height: 15px; color: #808080; transform: translateY(1px); }
.fs .f-row:last-child { margin-bottom: 14px; }
.fs .f-label { flex: 0 0 105px; }
.fs .f-in { flex: 0 0 355px; margin-left: 10px; }
.fs .f-combo { flex: 0 0 336px; }
.fs-adv { padding-top: 12px; padding-bottom: 7px; }
.chk { display: flex; align-items: flex-start; height: 16px; margin: 0 0 9px 11px; line-height: 18px; color: #444; }
.chk-box { flex: none; width: 16px; height: 16px; margin-right: 4px; border: 1px solid #cfd2d5; border-radius: 3px; background: #fff; }
.fs-vis { padding-bottom: 9px; }
.grid { margin-left: 10px; width: 460px; background: #fff; border-bottom: 2px solid #d9dde1; }
.g-tools { display: flex; align-items: center; height: 31px; padding: 3px 12px 0 9px; color: #1f6fbe; }
.g-ic { flex: none; width: 12px; height: 12px; margin-right: 8px; }
.g-btn { font-size: 11px; font-weight: bold; }
.g-add { margin-right: 16px; }
.g-end { margin-left: auto; }
.g-head { display: flex; height: 32px; align-items: center; border-bottom: 2px solid #d9dde1; padding-bottom: 1px; font-size: 11.150px; }
.g-desc { flex: 0 0 329px; height: 100%; display: flex; align-items: center; padding-left: 7px; border-right: 2px solid #eef0f2; color: #555; }
.g-alias { padding-left: 6px; color: #2a5cb8; }
.g-empty { height: 34px; padding: 12px 0 0 10px; color: #777; font-size: 10.800px; }

.mg { margin-bottom: 5px; font-size: 11.150px; }
.mg-row { display: grid; grid-template-columns: 281px 93px 187px 46px 92px 47px 47px; height: 24px; align-items: center; }
.mg-head { height: 32px; margin-bottom: 2px; border-bottom: 2px solid #d9dde1; color: #2a5cb8; align-items: stretch; }
.mg-head span { display: flex; align-items: center; padding-top: 3px; }
.mg-left { padding-left: 7px; }
.mg-head .mg-c { justify-content: center; }
.mg-gr { color: #666; }
.mg-name { display: flex; align-items: center; height: 24px; }
.mg-t { padding: 2px 8px 0; overflow: hidden; white-space: nowrap; text-overflow: ellipsis; }
.mg-c { padding-top: 2px; text-align: center; }
```
